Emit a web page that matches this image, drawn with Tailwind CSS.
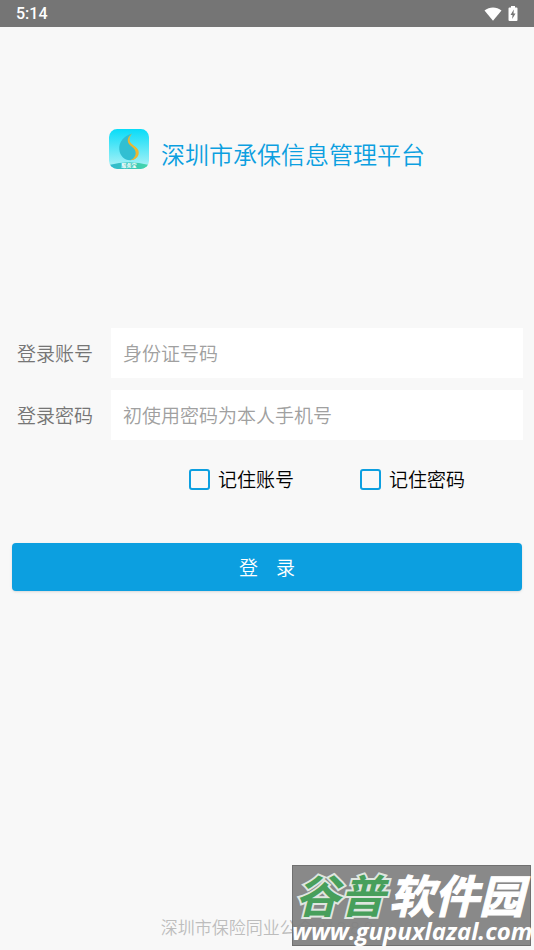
<!DOCTYPE html>
<html lang="zh-CN">
<head>
<meta charset="utf-8">
<meta name="viewport" content="width=device-width, initial-scale=1">
<title>深圳市承保信息管理平台</title>
<script src="https://cdn.jsdelivr.net/npm/@tailwindcss/browser@4"></script>
</head>
<body class="relative flex min-h-screen flex-col overflow-x-hidden bg-[#f8f8f8] font-['Roboto','Noto_Sans_CJK_SC',sans-serif] font-[350]">
<header class="flex h-[27px] items-center justify-between bg-[#757575] pr-4 pl-4 text-white">
  <span class="text-base leading-6 font-medium">5:14</span>
  <span class="flex items-center gap-1.5">
    <svg class="h-[14px] w-[18px]" viewBox="0 0 18 14" fill="currentColor" aria-hidden="true"><path d="M.5 3.500C5.500-.6 12.500-.6 17.500 3.500L9 13.700Z"/></svg>
    <svg class="h-4 w-[10px]" viewBox="0 0 10 16" aria-hidden="true"><path fill="currentColor" d="M3 0h4v1.500h1.500q1 0 1 1V14q0 1-1 1h-7q-1 0-1-1V2.500q0-1 1-1H3Z"/><path fill="#757575" d="M5.800 3.500 2.500 9h2L4.200 13 7.500 7.500h-2Z"/></svg>
  </span>
</header>
<main class="flex flex-1 flex-col px-3">
  <div class="mt-[102px] flex items-start justify-center gap-3">
    <svg class="size-10 shrink-0" viewBox="0 0 39 39" aria-hidden="true">
      <defs>
        <linearGradient id="sky" x2="0" y2="1"><stop stop-color="#08dcf8"/><stop offset="1" stop-color="#b4f3f6"/></linearGradient>
        <linearGradient id="band"><stop stop-color="#2fb8cf"/><stop offset="1" stop-color="#45d6a8"/></linearGradient>
        <clipPath id="tile"><rect width="39" height="39" rx="8"/></clipPath>
      </defs>
      <g clip-path="url(#tile)">
        <rect width="39" height="39" fill="url(#sky)"/>
        <path d="M22.500 4.500C14 7 9.500 13 10 20c.5 6 5 10.500 10.500 10.500 5 0 8-4 7.500-8-.5-4-6-5-8-9.500-1.200-3 0-6.500 2.500-8.500Z" fill="#31bfd2"/>
        <path d="M22.500 4.500c-4 3-5 6.500-3.500 9.500 2 3.500 7 4.500 7 9.500 0 3.500-2.500 6-5.500 7 5 0 8.500-3 8.500-7.500 0-5.500-6.500-6.500-8.500-10.500-1-2.500-.2-5.500 2-8Z" fill="#edb62f"/>
        <path d="M0 35q19.500-5 39 0v4H0Z" fill="url(#band)"/>
        <text x="19.500" y="37.500" text-anchor="middle" font-family="Noto Sans CJK SC, sans-serif" font-weight="700" font-size="5" fill="#fff">服务宝</text>
      </g>
    </svg>
    <h1 class="mt-[11px] text-2xl leading-8 font-[350] text-[#0c9fe0]">深圳市承保信息管理平台</h1>
  </div>
  <form class="mt-[156px]">
    <div class="-mr-px ml-[5px] grid grid-cols-[94px_1fr] items-center gap-y-3 text-[19px]">
      <label for="account" class="pt-1 text-[#757575]">登录账号</label>
      <input id="account" type="text" placeholder="身份证号码" class="h-[50px] w-full min-w-0 bg-white px-3 pt-0.5 outline-none placeholder:text-[#a0a0a0]">
      <label for="password" class="pt-1 text-[#757575]">登录密码</label>
      <input id="password" type="password" placeholder="初使用密码为本人手机号" class="h-[50px] w-full min-w-0 bg-white px-3 pt-0.5 outline-none placeholder:text-[#a0a0a0]">
    </div>
    <div class="mt-[25px] grid grid-cols-3 text-[19px] leading-7 text-black">
      <label class="col-start-2 ml-[7px] flex items-start gap-2"><input type="checkbox" class="mt-1 size-[21px] appearance-none rounded-[3px] border-2 border-[#0c9fe0] checked:bg-[#0c9fe0]"><span class="pt-0.5">记住账号</span></label>
      <label class="ml-2 flex items-start gap-2"><input type="checkbox" class="mt-1 size-[21px] appearance-none rounded-[3px] border-2 border-[#0c9fe0] checked:bg-[#0c9fe0]"><span class="pt-0.5">记住密码</span></label>
    </div>
    <button type="submit" class="mt-12 flex h-12 w-full items-center justify-center gap-[18px] rounded bg-[#0c9fe0] pt-1 text-[19px] text-white shadow"><span>登</span><span>录</span></button>
  </form>
  <footer class="mt-auto pb-2.5 text-center text-[17px] leading-6 text-[#bdbdbd]">深圳市保险同业公会&nbsp; V 2.8.0</footer>
</main>
<aside class="absolute right-[3px] bottom-1 flex h-[81px] w-[239px] flex-col items-center border border-[#707070] bg-[#808080]/93 text-white">
  <svg class="size-full overflow-visible" viewBox="0 0 237 79" role="img" aria-label="谷普软件园 www.gupuxlazal.com">
    <g font-family="Noto Sans CJK SC, sans-serif" font-weight="700" font-style="italic" font-size="45">
      <text x="2" y="47" fill="#479f5b" stroke="#dfe6e0" stroke-width="4" paint-order="stroke">谷普</text>
      <text x="96" y="47" fill="#fff" stroke="#fff" stroke-width="1">软件园</text>
    </g>
    <text x="-1" y="74" font-family="Open Sans, sans-serif" font-weight="700" font-style="italic" font-size="24" fill="#fff">www.gupuxlazal.com</text>
  </svg>
</aside>
</body>
</html>
